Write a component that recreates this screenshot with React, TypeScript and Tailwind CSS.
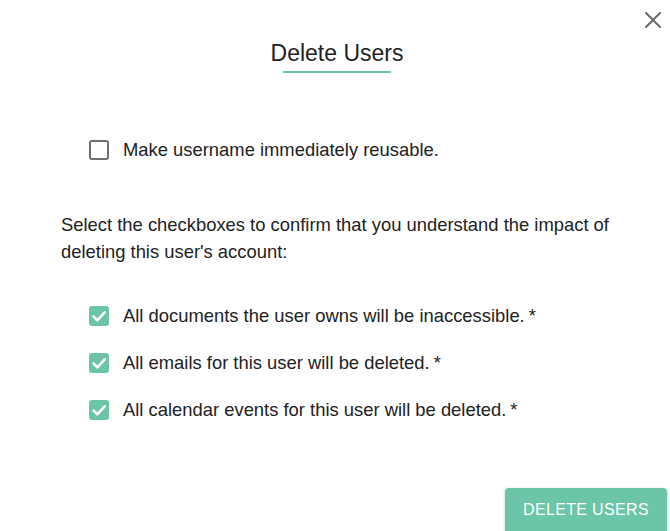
const items = [
  "All documents the user owns will be inaccessible.",
  "All emails for this user will be deleted.",
  "All calendar events for this user will be deleted.",
];

function CheckedBox() {
  return (
    <span className="flex h-5 w-5 shrink-0 items-center justify-center rounded-[3px] bg-[#6cc5a8]">
      <svg viewBox="0 0 20 20" className="h-5 w-5" fill="none" stroke="white" strokeWidth="2.6" strokeLinecap="round" strokeLinejoin="round">
        <path d="M4.5 10.5l3.8 3.8 7.4-8" />
      </svg>
    </span>
  );
}

export default function App() {
  return (
    <div className="relative h-[531px] w-[670px] overflow-hidden bg-white font-['Liberation_Sans',Arial,sans-serif] text-[#222]">
      {/* close */}
      <button className="absolute left-[645px] top-[12px] text-[#6b6b6b]">
        <svg viewBox="0 0 16 16" className="h-4 w-4" fill="none" stroke="currentColor" strokeWidth="2" strokeLinecap="round">
          <path d="M1 1l14 14M15 1L1 15" />
        </svg>
      </button>

      <div className="flex flex-col items-center pl-[4px] pt-[38px]">
        <h2 className="text-[23px] leading-[30px]">Delete Users</h2>
        <div className="mt-[3px] h-[2px] w-[108px] bg-[#6cc5a8]" />
      </div>

      <div className="px-[61px] pt-[64px]">
        <label className="ml-[28px] flex items-center gap-[14px] text-[18.4px] leading-[26px]">
          <span className="h-5 w-5 shrink-0 rounded-[3px] border-2 border-[#6f6f6f]" />
          Make username immediately reusable.
        </label>

        <p className="mt-[48px] text-[18.4px] leading-[27px]">
          Select the checkboxes to confirm that you understand the impact of deleting this user's account:
        </p>

        <div className="mt-[38px] flex flex-col gap-[21px]">
          {items.map((t) => (
            <label key={t} className="ml-[28px] flex items-center gap-[14px] text-[18.4px] leading-[26px]">
              <CheckedBox />
              <span>
                {t}
                <span className="ml-[4px]">*</span>
              </span>
            </label>
          ))}
        </div>
      </div>

      <button className="absolute bottom-[-8px] right-[3px] h-[51px] w-[162px] rounded-[4px] bg-[#6cc5a8] pb-[8px] text-[16px] tracking-[0.35px] text-white shadow-[0_1px_3px_rgba(0,0,0,0.25)]">
        DELETE USERS
      </button>
    </div>
  );
}
